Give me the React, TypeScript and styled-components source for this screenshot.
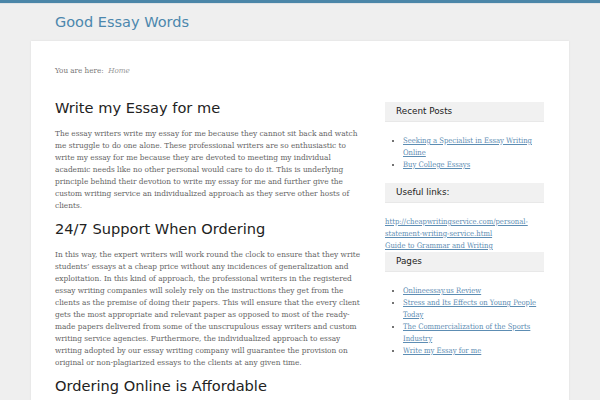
import styled, { createGlobalStyle } from 'styled-components';

const GlobalStyle = createGlobalStyle`
  body {
    margin: 0;
    background: #efefef;
    font-family: 'DejaVu Serif', serif;
  }
`;

const TopBar = styled.div`
  height: 3px;
  background: #4b86a8;
  border-bottom: 1px solid #dfe3e6;
`;

const Header = styled.header`
  padding: 8px 0 0 55px;
  height: 29px;
`;

const SiteTitle = styled.a`
  font-family: 'DejaVu Sans', sans-serif;
  font-size: 14.5px;
  line-height: 18px;
  color: #4c87ad;
  text-decoration: none;
`;

const Panel = styled.div`
  margin: 0 31px;
  background: #fff;
  box-shadow: 0 0 2px rgba(0, 0, 0, 0.08);
  padding: 25px 25px 0 24px;
  min-height: 360px;
`;

const Crumbs = styled.div`
  font-family: 'DejaVu Serif Condensed', 'DejaVu Serif', serif;
  font-stretch: condensed;
  font-size: 8px;
  line-height: 10px;
  color: #777;
  em {
    color: #999;
  }
`;

const Columns = styled.div`
  display: grid;
  grid-template-columns: 306px 159px;
  column-gap: 24px;
  margin-top: 21px;
`;

const Main = styled.main``;

const Heading = styled.h2`
  font-family: 'DejaVu Sans', sans-serif;
  font-weight: normal;
  font-size: 14.6px;
  color: #222;
  margin: 0 0 8px;
  line-height: 22px;
`;

const Para = styled.p`
  font-family: 'DejaVu Serif Condensed', 'DejaVu Serif', serif;
  font-stretch: condensed;
  font-size: 8.2px;
  line-height: 12px;
  color: #646464;
  margin: 0 0 7px;
`;

const Sidebar = styled.aside`
  padding-top: 5px;
`;

const WidgetTitle = styled.h4`
  box-sizing: border-box;
  font-family: 'DejaVu Sans', sans-serif;
  font-weight: normal;
  font-size: 8.8px;
  color: #222;
  background: #f1f1f1;
  margin: 0;
  height: 20px;
  line-height: 19px;
  padding-left: 11px;
  border-bottom: 1px solid #e8e8e8;
`;

const List = styled.ul`
  margin: 13px 0 12px;
  padding: 0 0 0 18px;
  list-style: disc;
  font-family: 'DejaVu Serif Condensed', 'DejaVu Serif', serif;
  font-stretch: condensed;
  font-size: 7.6px;
  line-height: 12px;
  color: #444;
`;

const Link = styled.a`
  color: #5d8db3;
  text-decoration: underline;
`;

const Plain = styled.div`
  margin: 13px 0 0;
  font-family: 'DejaVu Serif Condensed', 'DejaVu Serif', serif;
  font-stretch: condensed;
  font-size: 7.6px;
  line-height: 12px;
`;

const recent = ['Seeking a Specialist in Essay Writing Online', 'Buy College Essays'];
const pages = [
  'Onlineessay.us Review',
  'Stress and Its Effects on Young People Today',
  'The Commercialization of the Sports Industry',
  'Write my Essay for me',
];

export default function App() {
  return (
    <>
      <GlobalStyle />
      <TopBar />
      <Header>
        <SiteTitle href="#">Good Essay Words</SiteTitle>
      </Header>
      <Panel>
        <Crumbs>
          You are here:&nbsp; <em>Home</em>
        </Crumbs>
        <Columns>
          <Main>
            <Heading>Write my Essay for me</Heading>
            <Para>
              The essay writers write my essay for me because they cannot sit back and watch me
              struggle to do one alone. These professional writers are so enthusiastic to write my
              essay for me because they are devoted to meeting my individual academic needs like no
              other personal would care to do it. This is underlying principle behind their devotion
              to write my essay for me and further give the custom writing service an individualized
              approach as they serve other hosts of clients.
            </Para>
            <Heading>24/7 Support When Ordering</Heading>
            <Para>
              In this way, the expert writers will work round the clock to ensure that they write
              students’ essays at a cheap price without any incidences of generalization and
              exploitation. In this kind of approach, the professional writers in the registered
              essay writing companies will solely rely on the instructions they get from the clients
              as the premise of doing their papers. This will ensure that the every client gets the
              most appropriate and relevant paper as opposed to most of the ready-made papers
              delivered from some of the unscrupulous essay writers and custom writing service
              agencies. Furthermore, the individualized approach to essay writing adopted by our
              essay writing company will guarantee the provision on original or non-plagiarized
              essays to the clients at any given time.
            </Para>
            <Heading>Ordering Online is Affordable</Heading>
          </Main>
          <Sidebar>
            <WidgetTitle>Recent Posts</WidgetTitle>
            <List>
              {recent.map((t) => (
                <li key={t}>
                  <Link href="#">{t}</Link>
                </li>
              ))}
            </List>
            <WidgetTitle>Useful links:</WidgetTitle>
            <Plain>
              <Link href="#">http://cheapwritingservice.com/personal-statement-writing-service.html</Link>
              <br />
              <Link href="#">Guide to Grammar and Writing</Link>
            </Plain>
            <WidgetTitle>Pages</WidgetTitle>
            <List>
              {pages.map((t) => (
                <li key={t}>
                  <Link href="#">{t}</Link>
                </li>
              ))}
            </List>
          </Sidebar>
        </Columns>
      </Panel>
    </>
  );
}
